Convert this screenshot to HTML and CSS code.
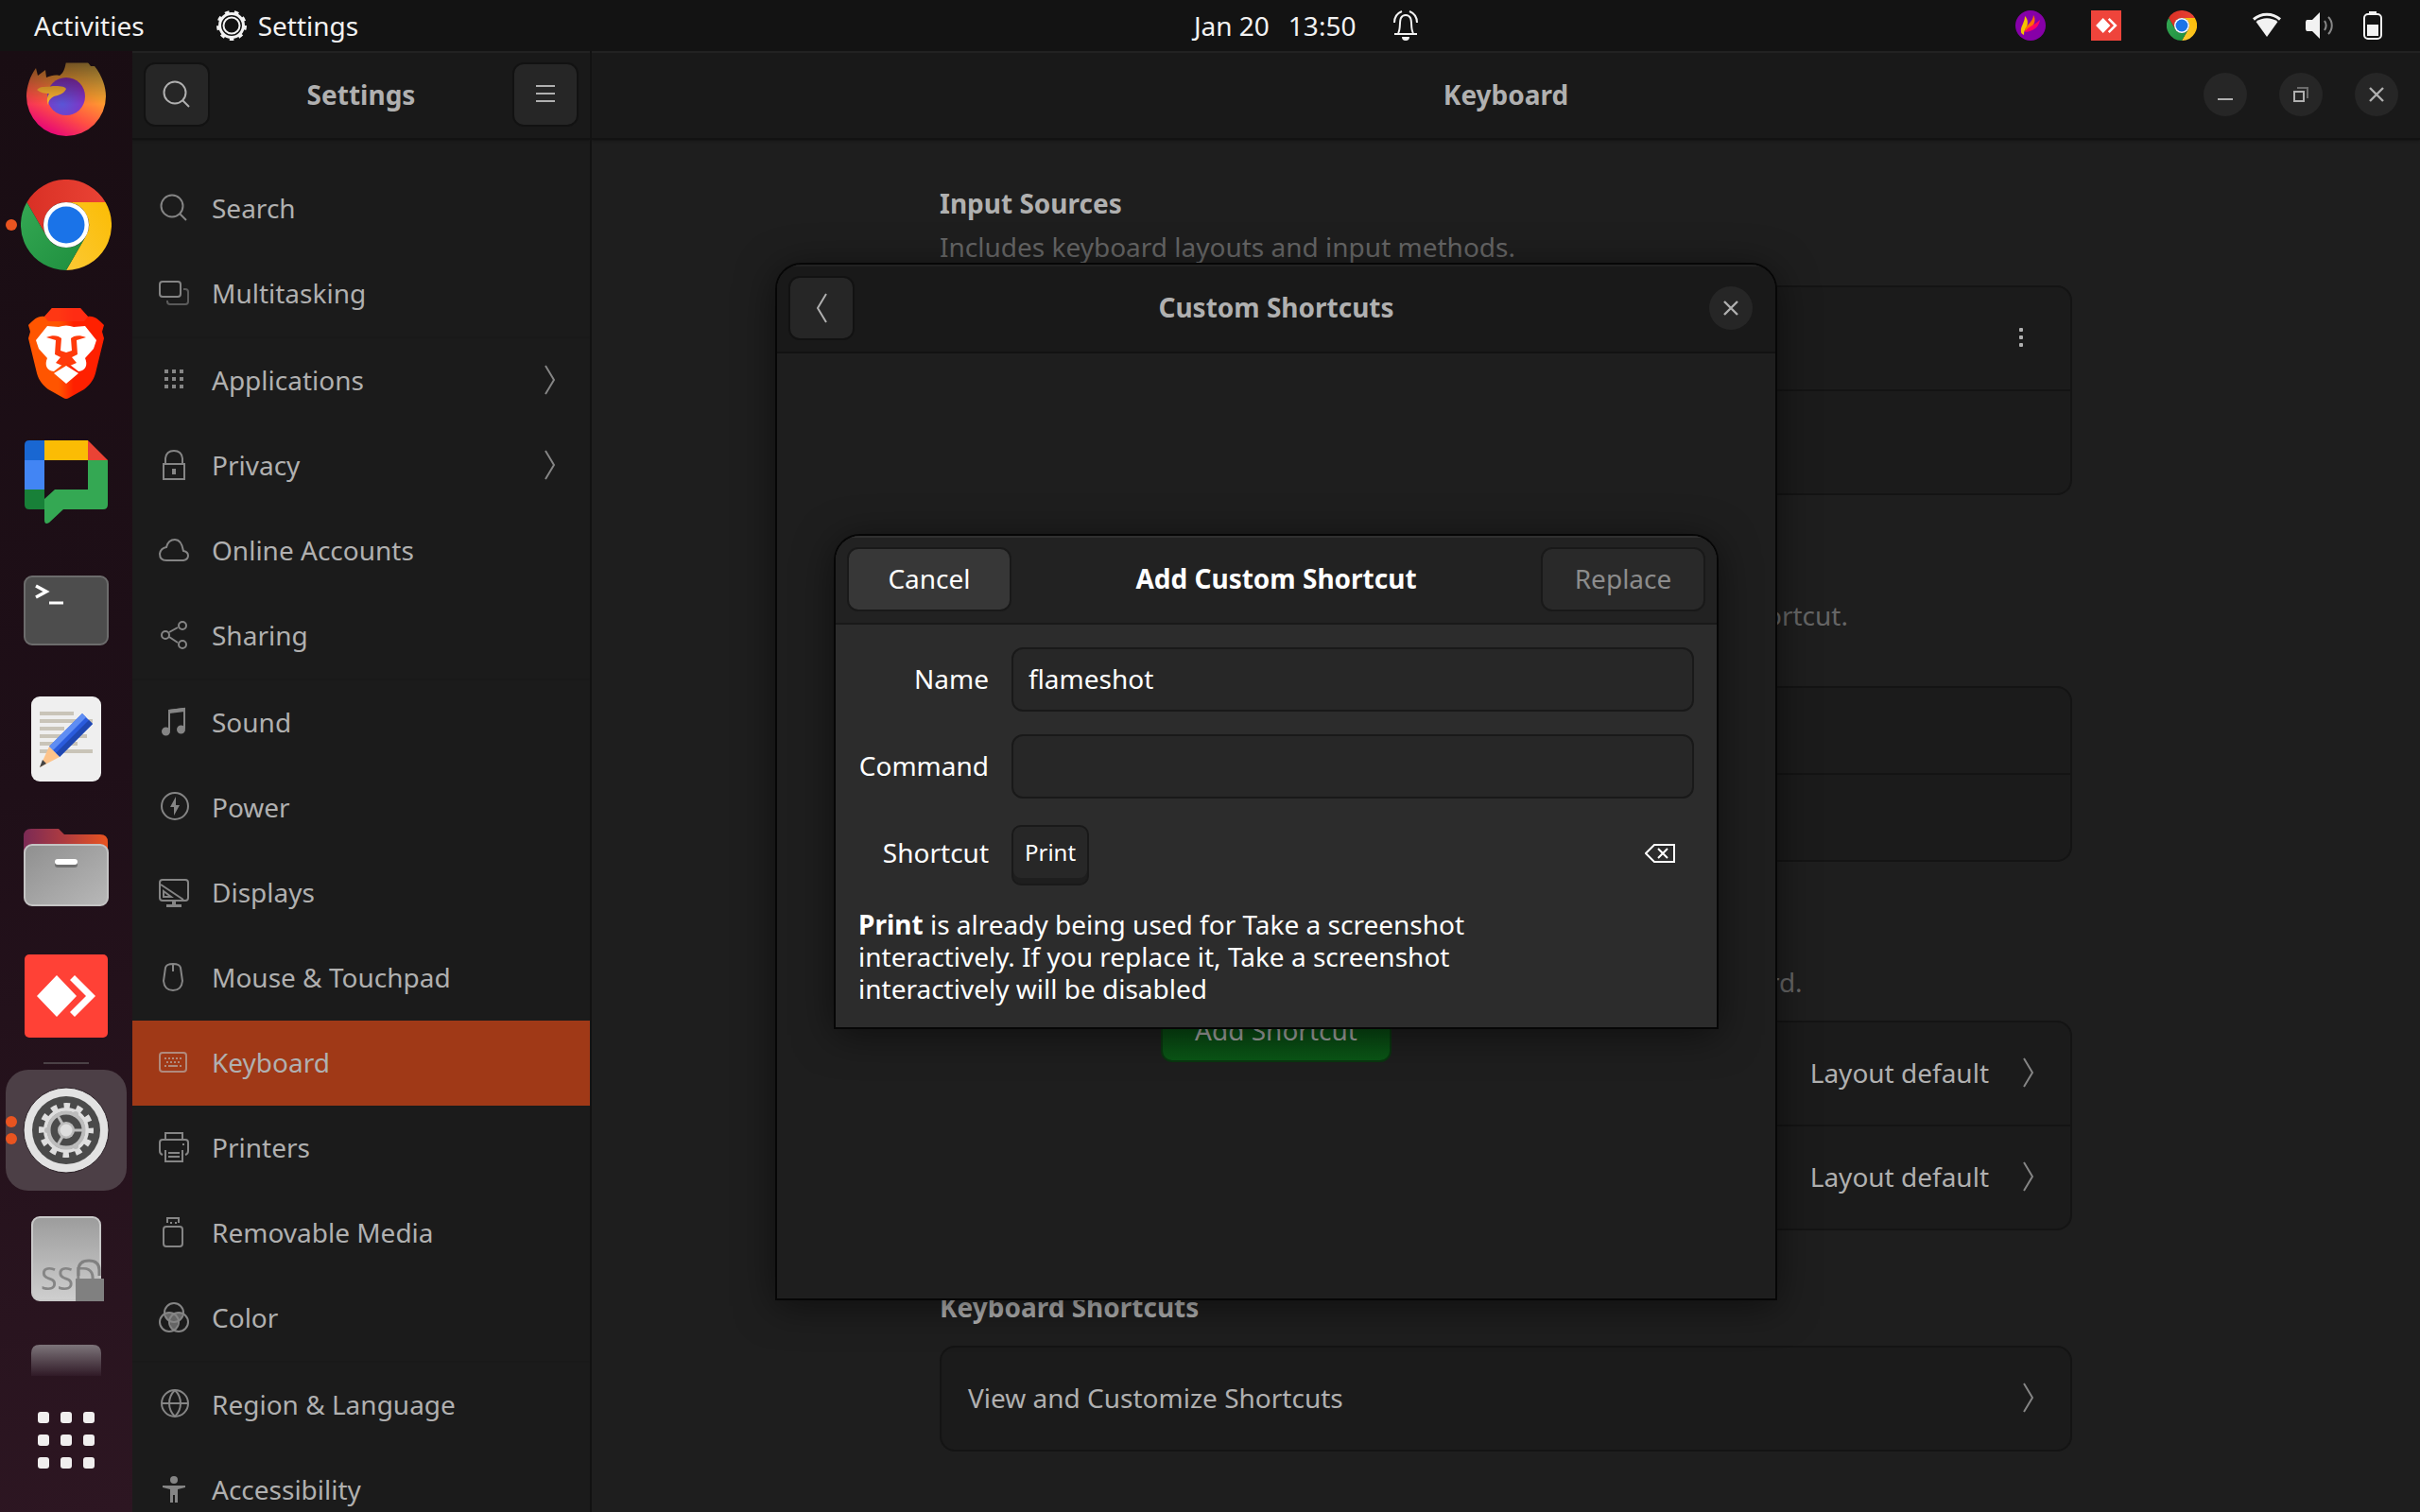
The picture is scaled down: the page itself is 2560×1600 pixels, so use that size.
FILE: index.html
```html
<!DOCTYPE html>
<html lang="en">
<head>
<meta charset="utf-8">
<title>Settings – Keyboard</title>
<link rel="stylesheet" href="styles.css">
</head>
<body>
<svg class="defs" width="0" height="0" aria-hidden="true">
  <defs>
    <linearGradient id="cr" x1="0" y1="0" x2="1" y2="0"><stop offset="0" stop-color="#d93025"/><stop offset="1" stop-color="#ea4335"/></linearGradient>
    <linearGradient id="cy" x1="1" y1="0" x2="0" y2="1"><stop offset="0" stop-color="#fbbc04"/><stop offset="1" stop-color="#fcc934"/></linearGradient>
    <linearGradient id="cg" x1="0" y1="0" x2="1" y2="1"><stop offset="0" stop-color="#34a853"/><stop offset="1" stop-color="#1e8e3e"/></linearGradient>
    <linearGradient id="ffBody" x1=".8" y1="0" x2=".3" y2="1"><stop offset="0" stop-color="#ffe14d"/><stop offset=".4" stop-color="#ffa02e"/><stop offset=".7" stop-color="#ff5043"/><stop offset="1" stop-color="#e4007c"/></linearGradient>
    <radialGradient id="ffGlobe" cx=".4" cy=".7" r=".7"><stop offset="0" stop-color="#5a55d6"/><stop offset="1" stop-color="#8a2cc0"/></radialGradient>
    <linearGradient id="br" x1="0" y1="0" x2="1" y2="0"><stop offset="0" stop-color="#ff5500"/><stop offset=".4" stop-color="#ff5500"/><stop offset=".6" stop-color="#ff2000"/><stop offset="1" stop-color="#ff2000"/></linearGradient>
    <linearGradient id="folderBack" x1="0" y1="0" x2="1" y2="0"><stop offset="0" stop-color="#7b2a55"/><stop offset=".5" stop-color="#b03c3f"/><stop offset="1" stop-color="#e95420"/></linearGradient>
    <linearGradient id="folderFront" x1="0" y1="0" x2="1" y2="1"><stop offset="0" stop-color="#8f8f8f"/><stop offset="1" stop-color="#b8b8b8"/></linearGradient>
    <linearGradient id="disk" x1="0" y1="0" x2="0" y2="1"><stop offset="0" stop-color="#9c9c9c"/><stop offset="1" stop-color="#cfcfcf"/></linearGradient>
    <linearGradient id="faded" x1="0" y1="0" x2="0" y2="1"><stop offset="0" stop-color="#7d757a"/><stop offset="1" stop-color="#301a27"/></linearGradient>
    <symbol id="chrome" viewBox="0 0 96 96">
      <path fill="url(#cr)" d="M6.400 24A48 48 0 0 1 89.600 24H48a24 24 0 0 0-20.800 36z"/>
      <path fill="url(#cy)" d="M89.600 24A48 48 0 0 1 48 96L68.800 60A24 24 0 0 0 48 24z"/>
      <path fill="url(#cg)" d="M48 96A48 48 0 0 1 6.400 24L27.200 60A24 24 0 0 0 68.800 60z"/>
      <circle cx="48" cy="48" r="24" fill="#fff"/><circle cx="48" cy="48" r="19.500" fill="#1a73e8"/>
    </symbol>
    <symbol id="anydesk" viewBox="0 0 88 88">
      <path fill="#fff" d="M35 22l21 22-21 22-21-22zM49 27l5-5 22 22-22 22-5-5 17-17z"/>
    </symbol>
    <symbol id="chevron" viewBox="0 0 12 32"><path d="M1 1l9 15-9 15" fill="none" stroke="currentColor" stroke-width="2"/></symbol>
    <symbol id="search" viewBox="0 0 32 32"><g fill="none" stroke="currentColor" stroke-width="2"><circle cx="14" cy="14" r="11.500"/><path d="M22 22l7 7"/></g></symbol>
    <symbol id="close" viewBox="0 0 16 16"><path d="M1 1l14 14M15 1L1 15" stroke="currentColor" stroke-width="2.400"/></symbol>
  </defs>
</svg>

<header class="topbar">
  <div class="topbar-left">
    <button class="bar-btn">Activities</button>
    <button class="bar-btn app-menu">
      <svg width="32" height="32" viewBox="0 0 32 32" fill="none" stroke="currentColor"><circle cx="16" cy="16" r="12.500" stroke-width="3"/><circle cx="16" cy="16" r="8.500" stroke-width="2"/><circle cx="16" cy="16" r="14.500" stroke-width="3" stroke-dasharray="4.600 5.520"/></svg>
      Settings
    </button>
  </div>
  <button class="bar-btn clock">
    <span>Jan 20</span><span>13:50</span>
    <svg class="bell" width="26" height="32" viewBox="0 0 26 32" fill="none" stroke="currentColor" stroke-width="2"><path d="M5 24c3-4 1-12 3-16 2-4 8-4 10 0s0 12 3 16"/><path d="M1 25h24M1 13c0-6 3-10 8-12M25 13c0-6-3-10-8-12"/><path d="M9 28h8a4 4 0 0 1-8 0z" fill="currentColor" stroke="none"/></svg>
  </button>
  <div class="tray">
    <svg width="32" height="32" viewBox="0 0 32 32"><circle cx="16" cy="16" r="16" fill="#8600a8"/><path fill="#f5c400" d="M6 23c-1-6 4-10 4-17 4 4 3 8 2 12-2 2-3 4-3 8-2-1-3-2-3-3z"/><path fill="#ff6d00" d="M10 22c0-7 9-9 9-17 3 5 1 9-1 12-3 2-6 4-8 5z"/><path fill="#ff0066" d="M10 23c4-7 9-6 16-13-1 7-6 12-16 13z"/></svg>
    <svg width="32" height="32" viewBox="0 0 32 32"><rect width="32" height="32" fill="#ef443b"/><use href="#anydesk" width="32" height="32"/></svg>
    <svg width="32" height="32"><use href="#chrome"/></svg>
    <div class="system">
      <svg width="32" height="28" viewBox="0 0 32 28"><path d="M2 7.500c8-7 20-7 28 0" fill="none" stroke="#f2f2f2" stroke-width="3"/><path fill="#f2f2f2" d="M4.500 10c7-5 16-5 23 0L16 26z"/></svg>
      <svg width="32" height="28" viewBox="0 0 32 28"><path fill="#f2f2f2" d="M2 8h6l8-8v28l-8-8H2l-1-2v-8z"/><path d="M21 9c2 3 2 7 0 10M25 5c5 5 5 13 0 18" fill="none" stroke="#888" stroke-width="2"/></svg>
      <svg width="32" height="30" viewBox="0 0 32 30"><rect x="7" y="3" width="18" height="26" rx="4" fill="none" stroke="#f2f2f2" stroke-width="2"/><path fill="#f2f2f2" d="M12 0h8v3h-8zM10 14h12v12H10z"/></svg>
    </div>
  </div>
</header>

<div class="desktop">
  <nav class="dock" aria-label="Dock">
    <div class="dock-scroll">
      <button class="dock-app" aria-label="Firefox"><svg width="96" height="96" viewBox="0 4 96 96"><path fill="url(#ffBody)" d="M6 52c0-10 4-22 10-30l2 8 8-6 1 8c5-2 9-3 14-2C50 24 46 10 52 6c4-3 14 2 22 14l4 0c8 10 12 22 12 32a42 42 0 0 1-84 0z"/><circle cx="48" cy="52" r="20" fill="url(#ffGlobe)"/><path fill="#ffb52e" d="M17 45c5-5 10-2 17-4 7 0 12 0 14 3-2 5-8 7-13 8-4 2-6 5-6 9-2-5-1-9 1-12-5 0-9-1-13-4z"/></svg></button>
      <button class="dock-app" aria-label="Chrome"><i class="dots"><b></b></i><svg width="96" height="96"><use href="#chrome"/></svg></button>
      <button class="dock-app" aria-label="Brave"><svg width="96" height="96" viewBox="0 0 96 96"><path fill="url(#br)" d="M33 0h30l8 9c7-1 11 3 17 9l-2 7 2 7-9 37c-2 8-7 13-12 17L51 95q-3 2-6 0L29 86c-5-4-10-9-12-17L8 32l2-7-2-7c6-6 10-10 17-9z"/><path fill="#ff3018" d="M33 0h30l8 9-4 5H29l-4-5z" opacity=".8"/><path fill="#fff" d="M28 19l12 1q8-3 16 0l12-1 12 15-3 9-9 10c3 7 1 13-7 14l-9-7-4-3-4 3-9 7c-8-1-10-7-7-14l-9-10-3-9zM48 61l13 8-13 11-13-11z"/><path fill="#ff3a0a" d="M27 31c7-3 13-2 16 1l-1 13 6 2 6-2-1-13c3-3 9-4 16-1l-10 3 1 15-6 3 5 6-7 3-4-3-4 3-7-3 5-6-6-3 1-15z"/></svg></button>
      <button class="dock-app" aria-label="Google Chat"><svg width="96" height="96" viewBox="0 0 96 96"><path fill="#1967d2" d="M4 9q0-5 5-5h16v21H4z"/><path fill="#fbbc04" d="M25 4h46v21H25z"/><path fill="#ea4335" d="M71 4l21 21H71z"/><path fill="#4285f4" d="M4 25h21v31H4z"/><path fill="#188038" d="M4 56h21v21H9q-5 0-5-5z"/><path fill="#34a853" d="M71 25h21v47q0 5-5 5H45L30 91q-5 3-5-3V66l11-10h35z"/></svg></button>
      <button class="dock-app" aria-label="Terminal"><svg width="96" height="96" viewBox="0 0 96 96"><rect x="4" y="12" width="88" height="72" rx="8" fill="#4d4d4d" stroke="#6c6c6c" stroke-width="2"/><path d="M16 22l11 6-11 6" fill="none" stroke="#fff" stroke-width="3.500"/><path d="M30 40h15" stroke="#fff" stroke-width="3"/></svg></button>
      <button class="dock-app" aria-label="Text Editor"><svg width="96" height="96" viewBox="0 0 96 96"><rect x="11" y="3" width="74" height="90" rx="9" fill="#efefef"/><path d="M20 21h36M20 29h56M20 37h26M20 45h50M20 53h40M20 61h56" stroke="#c9c4b8" stroke-width="4"/><path fill="#2a5bdc" d="M30 56l35-35 11 11-35 35z"/><path fill="#5f8df3" d="M30 56l35-35 4 4-35 35z"/><path fill="#1f47b0" d="M37 63l35-35 4 4-35 35z"/><path fill="#fdc38a" d="M30 56l11 11-21 11z"/><path fill="#444" d="M20 78l3-8 4 4z"/></svg></button>
      <button class="dock-app" aria-label="Files"><svg width="96" height="96" viewBox="0 0 96 96"><path fill="url(#folderBack)" d="M3 15q0-8 8-8h29l6 6h38q8 0 8 8v24H3z"/><rect x="4" y="24" width="88" height="64" rx="8" fill="url(#folderFront)" stroke="#c4c4c4" stroke-width="2"/><rect x="36" y="40" width="24" height="8" rx="3" fill="#6f6f6f"/><rect x="36" y="39" width="24" height="6" rx="3" fill="#fff"/></svg></button>
      <button class="dock-app" aria-label="AnyDesk"><svg width="96" height="96" viewBox="0 0 96 96"><rect x="4" y="4" width="88" height="88" rx="5" fill="#ff4136"/><use href="#anydesk" x="3" y="4" width="88" height="88"/></svg></button>
      <hr class="dock-sep">
      <button class="dock-app" aria-label="Settings"><span class="active-app"><i class="dots"><b></b><b></b></i><svg width="96" height="96" viewBox="0 0 96 96"><circle cx="48" cy="48" r="45" fill="#e2e2e2" stroke="#2a2026" stroke-width="1"/><circle cx="48" cy="48" r="36" fill="#4a4a4a"/><circle cx="48" cy="48" r="22" fill="none" stroke="#dedede" stroke-width="4"/><circle cx="48" cy="48" r="26" fill="none" stroke="#dedede" stroke-width="6" stroke-dasharray="6.600 7.013" stroke-dashoffset="3.300"/><circle cx="48" cy="48" r="18.500" fill="none" stroke="#bcbcbc" stroke-width="4"/><path d="M48 48h18M48 48l-9-15.600M48 48l-9 15.600" stroke="#bcbcbc" stroke-width="3"/><circle cx="48" cy="48" r="9" fill="#bcbcbc"/><circle cx="48" cy="48" r="6.500" fill="#dedede"/><g fill="#bcbcbc"><circle cx="28" cy="48" r="3"/><circle cx="58" cy="31" r="3"/><circle cx="58" cy="65" r="3"/></g></svg></span></button>
      <button class="dock-app" aria-label="SSD volume"><svg width="96" height="96" viewBox="0 0 96 96"><rect x="12" y="4" width="72" height="88" rx="8" fill="url(#disk)" stroke="#c8c8c8" stroke-width="2"/><text x="21" y="81" class="ssd">SSD</text><path d="M61 66v-6q0-10 11-10t11 10v6" fill="none" stroke="#808080" stroke-width="3"/><path fill="#808080" d="M58 69h30v24H58z"/></svg></button>
      <button class="dock-app" aria-label="Volume"><svg width="96" height="96" viewBox="0 0 96 96"><path fill="url(#faded)" d="M11 36V12q0-9 9-9h56q9 0 9 9v24z"/></svg></button>
    </div>
    <button class="show-apps" aria-label="Show Applications"><i></i><i></i><i></i><i></i><i></i><i></i><i></i><i></i><i></i></button>
  </nav>

  <main class="window">
    <section class="side">
      <header class="titlebar">
        <button class="tool-btn" aria-label="Search"><svg width="32" height="32"><use href="#search"/></svg></button>
        <h1>Settings</h1>
        <button class="tool-btn" aria-label="Menu"><svg width="32" height="32" viewBox="0 0 32 32"><path d="M6 7h20M6 15h20M6 23h20" stroke="currentColor" stroke-width="2"/></svg></button>
      </header>
      <nav class="panels" aria-label="Settings panels">
        <div class="group">
          <a href="#search-panel"><svg><use href="#search"/></svg>Search</a>
          <a href="#multitasking"><svg viewBox="0 0 32 32"><rect x="1" y="4" width="22" height="16" rx="3"/><path opacity=".6" d="M26 12h2q3 0 3 3v10q0 3-3 3H12q-3 0-3-3v-1"/></svg>Multitasking</a>
        </div>
        <div class="group">
          <a href="#applications"><svg viewBox="0 0 32 32"><path stroke-width="4" stroke-dasharray="4 4" d="M6 7h20M6 15h20M6 23h20"/></svg>Applications<svg class="chev"><use href="#chevron"/></svg></a>
          <a href="#privacy"><svg viewBox="0 0 32 32"><path d="M5 15h22v16H5zM7 15V9q1-8 9-8t9 8v6"/><path stroke-width="4" d="M16 20v6"/></svg>Privacy<svg class="chev"><use href="#chevron"/></svg></a>
          <a href="#online"><svg viewBox="0 0 32 32"><path d="M8 27q-7 0-7-7 1-6 7-7 2-8 9-8t9 12q5 1 5 5t-5 5z"/></svg>Online Accounts</a>
          <a href="#sharing"><svg viewBox="0 0 32 32"><circle cx="7" cy="16" r="4"/><circle cx="25" cy="6" r="4"/><circle cx="25" cy="26" r="4"/><path d="M11 13l9-5M11 18l9 6"/></svg>Sharing</a>
        </div>
        <div class="group">
          <a href="#sound"><svg viewBox="0 0 32 32"><path d="M11 25V4l16-2v21"/><path stroke-width="4" d="M11 5l16-2"/><circle cx="7.500" cy="26" r="3.500" fill="currentColor"/><circle cx="23.500" cy="24" r="3.500" fill="currentColor"/></svg>Sound</a>
          <a href="#power"><svg viewBox="0 0 32 32"><circle cx="17" cy="15" r="14"/><path fill="currentColor" stroke="none" d="M18 5l-6 11h4v9l6-11h-4z"/></svg>Power</a>
          <a href="#displays"><svg viewBox="0 0 32 32"><rect x="1" y="3" width="30" height="22" rx="3"/><path d="M2 8l24 16M5 15l8 6H5z"/><path stroke-width="4" d="M16 26v4M8 31h16"/></svg>Displays</a>
          <a href="#mouse"><svg viewBox="0 0 32 32"><path d="M15 2q7 0 8 4l2 14q-1 10-10 10T5 20L7 6q1-4 8-4zM15 3v7"/></svg>Mouse &amp; Touchpad</a>
          <a href="#keyboard" class="selected" aria-current="page"><svg viewBox="0 0 32 32"><rect x="1" y="6" width="28" height="20" rx="3"/><path stroke-dasharray="2 2" d="M6 12h18M8 16h15"/><path stroke-dasharray="2 2 10 2 2" d="M6 20h18"/></svg>Keyboard</a>
          <a href="#printers"><svg viewBox="0 0 32 32"><path d="M7 8V1h18v7M4 24q-3-1-3-4v-9q0-3 3-3h24q3 0 3 3v9q0 3-3 4"/><path d="M7 19v12h18V19M10 22h12M10 26h12M25 13h2"/></svg>Printers</a>
          <a href="#media"><svg viewBox="0 0 32 32"><rect x="5" y="10" width="20" height="21" rx="3"/><path d="M9 6V1h12v5M12 6h2M17 6h2"/></svg>Removable Media</a>
          <a href="#color"><svg viewBox="0 0 32 32"><circle cx="16" cy="11" r="10"/><circle cx="11" cy="21" r="10"/><circle cx="21" cy="21" r="10"/><path fill="currentColor" stroke="none" opacity=".7" d="M7 12q5-2 9 1 4-3 9-1-1 6-5 8 0 6-4 9-4-3-4-9-4-2-5-8z"/></svg>Color</a>
        </div>
        <div class="group">
          <a href="#region"><svg viewBox="0 0 32 32"><circle cx="17" cy="15" r="14"/><path d="M3 15h28M17 1c-8 8-8 20 0 28M17 1c8 8 8 20 0 28"/></svg>Region &amp; Language</a>
          <a href="#accessibility"><svg viewBox="0 0 32 32"><g fill="currentColor" stroke="none"><circle cx="16" cy="6" r="4"/><path d="M4 12h24v2l-8 2v14h-3v-8h-2v8h-3V16l-8-2z"/></g></svg>Accessibility</a>
        </div>
      </nav>
    </section>

    <section class="content">
      <header class="titlebar">
        <h2>Keyboard</h2>
        <div class="controls">
          <button class="round" aria-label="Minimize"><svg width="16" height="16" viewBox="0 0 16 16"><path d="M0 13h16" stroke="currentColor" stroke-width="2"/></svg></button>
          <button class="round" aria-label="Restore"><svg width="16" height="16" viewBox="0 0 16 16" fill="none" stroke="currentColor" stroke-width="2"><path d="M1 5h10v10H1z"/><path opacity=".5" d="M4 1h11v11"/></svg></button>
          <button class="round" aria-label="Close"><svg width="16" height="16"><use href="#close"/></svg></button>
        </div>
      </header>
      <div class="page">
        <section>
          <h3>Input Sources</h3>
          <p>Includes keyboard layouts and input methods.</p>
          <div class="card tall"><div class="row"><button class="dots-btn" aria-label="More"><i></i><i></i><i></i></button></div><div class="row"></div></div>
        </section>
        <section>
          <h3>Input Source Switching</h3>
          <p>Input sources can be switched using the Super+Space keyboard shortcut.<br>This can be changed in the keyboard shortcut settings.</p>
          <div class="card"><div class="row"></div><div class="row"></div></div>
        </section>
        <section>
          <h3>Special Character Entry</h3>
          <p>Methods for entering symbols and letter variants using the keyboard.</p>
          <div class="card tall">
            <a class="row" href="#alternate" aria-label="Alternate Characters Key"><span class="value">Layout default</span><svg class="chev"><use href="#chevron"/></svg></a>
            <a class="row" href="#compose" aria-label="Compose Key"><span class="value">Layout default</span><svg class="chev"><use href="#chevron"/></svg></a>
          </div>
        </section>
        <section>
          <h3>Keyboard Shortcuts</h3>
          <div class="card tall"><a class="row" href="#shortcuts">View and Customize Shortcuts<svg class="chev"><use href="#chevron"/></svg></a></div>
        </section>
      </div>
    </section>

    <div class="overlay">
      <section class="dialog shortcuts" aria-label="Custom Shortcuts">
        <header class="dialog-bar">
          <button class="tool-btn" aria-label="Back"><svg class="back" width="12" height="32"><use href="#chevron"/></svg></button>
          <h2>Custom Shortcuts</h2>
          <button class="round" aria-label="Close"><svg width="16" height="16"><use href="#close"/></svg></button>
        </header>
        <div class="empty">
          <button class="suggested">Add Shortcut</button>
        </div>
      </section>
    </div>

    <div class="overlay">
      <form class="dialog add" aria-label="Add Custom Shortcut">
        <header class="dialog-bar">
          <button type="button" class="text-btn">Cancel</button>
          <h2>Add Custom Shortcut</h2>
          <button type="button" class="text-btn" disabled>Replace</button>
        </header>
        <div class="fields">
          <label for="name">Name</label><input id="name" type="text" value="flameshot">
          <label for="command">Command</label><input id="command" type="text">
          <span class="label">Shortcut</span>
          <div class="shortcut">
            <kbd>Print</kbd>
            <button type="button" class="clear" aria-label="Reset shortcut"><svg width="32" height="20" viewBox="0 0 32 20" fill="none" stroke="currentColor" stroke-width="2"><path d="M10 1h21v18H10L1 10z"/><path d="M14 5l10 10M24 5L14 15"/></svg></button>
          </div>
          <p class="notice"><strong>Print</strong> is already being used for Take a screenshot<br>interactively. If you replace it, Take a screenshot<br>interactively will be disabled</p>
        </div>
      </form>
    </div>
  </main>
</div>
</body>
</html>
```
FILE: styles.css
```css
* { box-sizing: border-box; }

body {
  margin: 0;
  height: 100vh;
  display: flex;
  flex-direction: column;
  overflow: hidden;
  background: #131313;
  color: #b0b0b0;
  font: 28px/34px "Noto Sans", "Open Sans", sans-serif;
}

h1, h2, h3, p { margin: 0; font-size: 28px; }
h1, h2, h3 { font-weight: 700; }
svg { display: block; flex: none; }
a { color: inherit; text-decoration: none; }

button {
  font: inherit;
  color: inherit;
  background: none;
  border: 0;
  padding: 0;
}

.defs { position: absolute; }

/* Top bar */
.topbar {
  flex: none;
  height: 54px;
  display: grid;
  grid-template-columns: 1261fr auto 1058fr;
  align-items: center;
  color: #f2f2f2;
}
.topbar-left { display: flex; gap: 76px; padding-left: 36px; }
.bar-btn { display: flex; align-items: center; white-space: nowrap; }
.app-menu { gap: 12px; }
.clock { gap: 20px; }
.bell { margin-left: 20px; }
.tray { display: flex; align-items: center; justify-content: flex-end; gap: 48px; padding-right: 34px; }
.system { display: flex; align-items: center; gap: 24px; margin-left: 10px; }

.desktop { flex: 1; display: flex; min-height: 0; }

/* Dock */
.dock {
  flex: none;
  width: 140px;
  display: flex;
  flex-direction: column;
  background: linear-gradient(165deg, #190d13, #1f0f18 50%, #2d1622);
}
.dock-scroll {
  flex: 1;
  min-height: 0;
  overflow: hidden;
  -webkit-mask-image: linear-gradient(transparent 12px, rgba(0, 0, 0, .4) 13px, #000 56px);
  mask-image: linear-gradient(transparent 12px, rgba(0, 0, 0, .4) 13px, #000 56px);
}
.dock-app {
  position: relative;
  display: flex;
  align-items: center;
  justify-content: center;
  width: 100%;
  height: 136px;
}
.dock-app:first-child { margin-top: -20px; }
.dock-sep { width: 48px; height: 2px; margin: 2px auto; border: 0; background: #4b4146; }
.active-app {
  position: relative;
  display: grid;
  place-items: center;
  width: 128px;
  height: 128px;
  border-radius: 24px;
  background: #4c3f46;
}
.dots {
  position: absolute;
  left: 6px;
  top: 0;
  bottom: 0;
  display: flex;
  flex-direction: column;
  justify-content: center;
  gap: 6px;
}
.active-app .dots { left: 0; }
.dots b { width: 12px; height: 12px; border-radius: 6px; background: #e95420; }
.ssd { font: 32px "Noto Sans", sans-serif; fill: #858585; }
.show-apps {
  flex: none;
  height: 144px;
  display: grid;
  grid-template-columns: repeat(3, 12px);
  grid-auto-rows: 12px;
  gap: 12px;
  place-content: center;
  padding-bottom: 8px;
}
.show-apps i { border-radius: 3px; background: #f0eeee; }

/* Settings window */
.window { position: relative; flex: 1; display: flex; min-width: 0; background: #1e1e1e; }
.side {
  flex: none;
  width: 486px;
  display: flex;
  flex-direction: column;
  border-right: 2px solid #121212;
  background: #1b1b1b;
  overflow: hidden;
}
.titlebar {
  flex: none;
  height: 94px;
  display: flex;
  align-items: center;
  justify-content: space-between;
  padding: 0 12px;
  background: #191919;
  border-bottom: 2px solid #121212;
  box-shadow: inset 0 2px #222, 0 1px 2px #141414;
}
.tool-btn {
  width: 70px;
  height: 68px;
  display: grid;
  place-items: center;
  border: 2px solid #121212;
  border-radius: 12px;
  background: #262626;
}
.panels { padding-top: 28px; }
.group + .group { border-top: 2px solid #191919; }
.panels a {
  height: 90px;
  display: flex;
  align-items: center;
  gap: 24px;
  padding: 0 36px 2px 28px;
}
.panels a > svg:first-child { width: 32px; height: 32px; color: #858585; fill: none; stroke: currentColor; stroke-width: 2; }
.panels .selected { background: #a03917; }
.panels .selected > svg:first-child { color: #b08a7d; }
.panels a > .chev, .chev { width: 12px; height: 32px; margin-left: auto; color: #858585; }

.content { flex: 1; display: flex; flex-direction: column; min-width: 0; overflow: hidden; }
.content .titlebar { display: grid; grid-template-columns: 1fr auto 1fr; padding: 0 23px; }
.content .titlebar h2 { grid-column: 2; }
.controls { display: flex; justify-content: flex-end; gap: 34px; }
.round {
  width: 46px;
  height: 46px;
  display: grid;
  place-items: center;
  border-radius: 50%;
  background: #262626;
}

.page {
  width: 100%;
  max-width: 1198px;
  margin: 0 auto;
  padding-top: 50px;
  display: flex;
  flex-direction: column;
  gap: 64px;
}
.page p { margin-top: 12px; color: #666; }
.card {
  margin-top: 24px;
  border: 2px solid #141414;
  border-radius: 16px;
  background: #1b1b1b;
}
.row {
  height: 90px;
  display: flex;
  align-items: center;
  gap: 36px;
  padding: 0 38px 2px 28px;
}
.tall .row { height: 108px; }
.row + .row { border-top: 2px solid #141414; height: 92px; }
.tall .row + .row { height: 110px; }
.value { margin-left: auto; }
.value + .chev { margin-left: 0; }
.dots-btn { margin-left: auto; width: 28px; display: grid; justify-items: center; gap: 4px; }
.dots-btn i { width: 4px; height: 4px; border-radius: 1px; background: #b0b0b0; }

/* Dialogs */
.overlay { position: absolute; inset: 0; display: grid; place-items: center; }
.dialog {
  display: flex;
  flex-direction: column;
  border: 2px solid #060606;
  border-radius: 28px 28px 0 0;
  background: #1e1e1e;
  box-shadow: 0 6px 40px rgba(0, 0, 0, .5);
  overflow: hidden;
}
.dialog-bar {
  flex: none;
  height: 94px;
  display: grid;
  grid-template-columns: 1fr auto 1fr;
  align-items: center;
  padding: 0 12px;
  background: #191919;
  border-bottom: 2px solid #121212;
  box-shadow: inset 0 2px #222;
}
.dialog-bar h2 { padding-bottom: 2px; }
.dialog-bar > :last-child { justify-self: end; }
.dialog-bar .round { margin-right: 12px; }
.back { transform: scaleX(-1); }

.shortcuts { width: 1060px; height: 1098px; }
.empty {
  flex: 1;
  display: flex;
  flex-direction: column;
  align-items: center;
  justify-content: flex-end;
  padding-bottom: 250px;
}
.suggested {
  height: 68px;
  padding: 0 34px;
  border: 2px solid #0a3510;
  border-radius: 12px;
  background: linear-gradient(#073c0f, #0a5616);
  color: #a2a2a2;
}

.add { width: 936px; background: #2c2c2c; color: #fff; }
.add .dialog-bar { background: #222; border-color: #191919; box-shadow: inset 0 2px #303030; }
.text-btn {
  width: 174px;
  height: 68px;
  padding-bottom: 2px;
  border: 2px solid #191919;
  border-radius: 12px;
  background: #373737;
}
.text-btn:disabled { background: #292929; color: #8c8c8c; }
.fields {
  display: grid;
  grid-template-columns: 138px 1fr;
  gap: 24px;
  align-items: center;
  padding: 24px;
}
.fields label, .label { justify-self: end; padding-bottom: 2px; }
.fields input {
  width: 100%;
  height: 68px;
  padding: 0 16px 2px;
  border: 2px solid #191919;
  border-radius: 12px;
  background: #272727;
  color: inherit;
  font: inherit;
}
.shortcut { height: 68px; display: flex; align-items: center; justify-content: space-between; padding-right: 20px; }
kbd {
  margin-top: 4px;
  padding: 10px 12px 16px;
  border: 2px solid #191919;
  border-radius: 10px;
  background: #272727;
  box-shadow: inset 0 -6px #1e1e1e;
  font: 24px/34px "Noto Sans", "Open Sans", sans-serif;
}
.notice { grid-column: 1 / -1; }
```
